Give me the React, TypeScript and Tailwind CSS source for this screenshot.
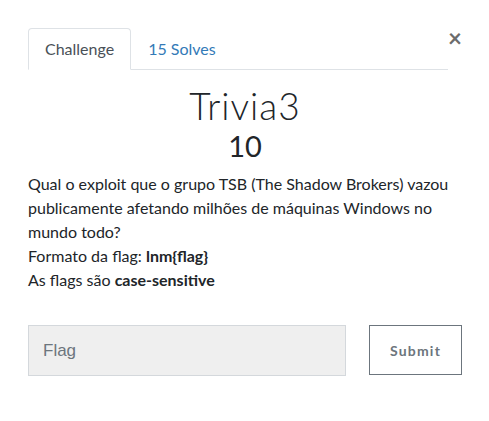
import React from "react";

export default function App() {
  return (
    <div className="w-[489px] h-[421px] bg-white text-[#212529]" style={{ fontFamily: "Lato, 'Noto Sans', sans-serif" }}>
      <div className="pt-[28px] pl-[28px] pr-[27px] relative">
        <button className="absolute right-[27px] top-[26px] text-[24px] leading-none font-bold text-[#6c6c6c]">×</button>
        <div className="flex w-[420px] border-b border-[#dee2e6] text-[16px]">
          <div className="h-[42px] px-[16px] flex items-center border border-[#dee2e6] border-b-white -mb-px rounded-t-[4px] text-[#495057] bg-white">Challenge</div>
          <div className="h-[41px] px-[17px] flex items-center text-[#337ab7]">15 Solves</div>
        </div>
        <div className="flex flex-col items-center mt-[14px]">
          <h3 className="text-[37px] leading-[44px] font-light tracking-[1px] text-[#212529]">Trivia3</h3>
          <h4 className="text-[29px] leading-[36px] font-normal mt-[0px]">10</h4>
        </div>
        <div className="mt-[8px] text-[16px] leading-[24px]">
          <p>Qual o exploit que o grupo TSB (The Shadow Brokers) vazou publicamente afetando milhões de máquinas Windows no mundo todo?</p>
          <p>Formato da flag: <b>lnm&#123;flag&#125;</b></p>
          <p>As flags são <b>case-sensitive</b></p>
        </div>
        <div className="flex mt-[33px] items-start">
          <div className="w-[318px] h-[51px] bg-[#efefef] border border-[#d4d8dc] flex items-center pl-[14px] text-[17px] text-[#6c757d]" style={{ fontFamily: "'Liberation Sans', Arial, sans-serif" }}>Flag</div>
          <button className="ml-[23px] w-[93px] h-[50px] border border-[#6c757d] text-[#6c757d] text-[14px] font-bold tracking-[1.2px] bg-white">Submit</button>
        </div>
      </div>
    </div>
  );
}
